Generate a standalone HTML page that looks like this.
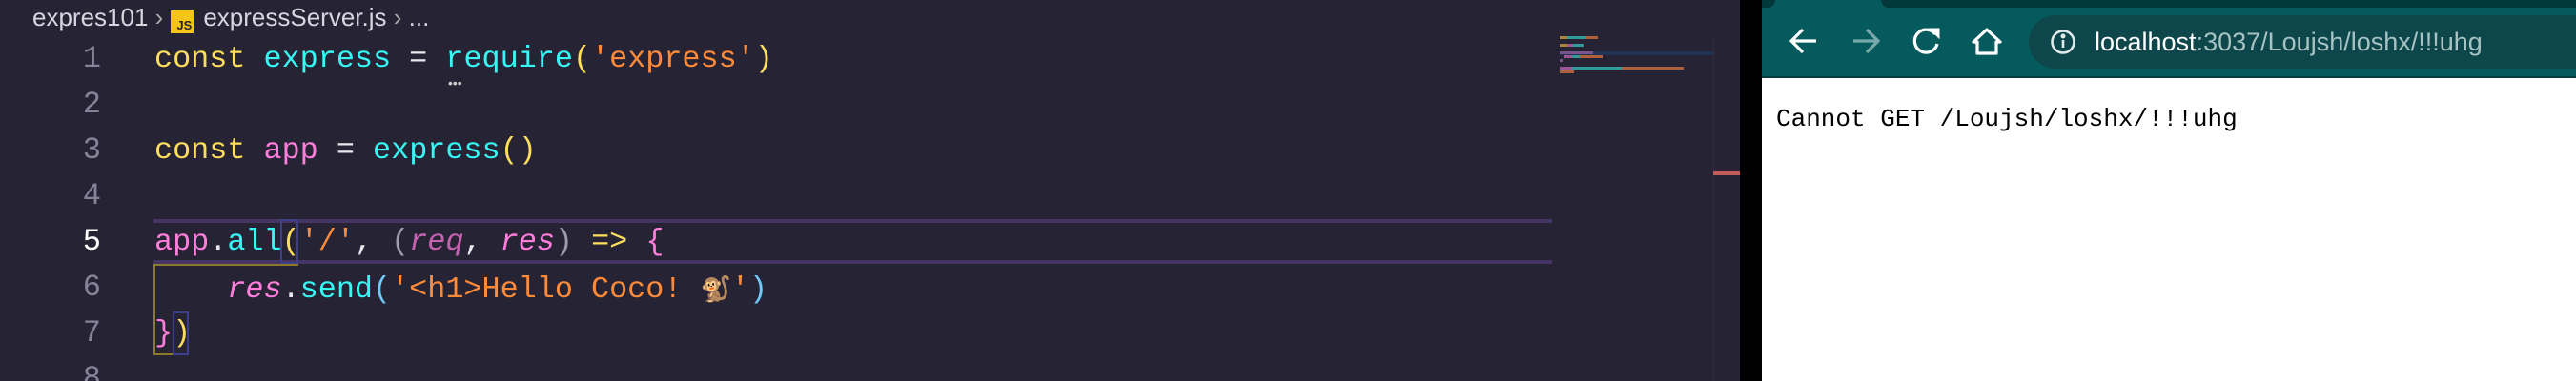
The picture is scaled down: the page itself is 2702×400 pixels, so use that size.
<!DOCTYPE html>
<html style="margin:0;width:2702px;height:400px;overflow:hidden"><head><meta charset="utf-8"><style>
body{margin:0;width:2702px;height:400px;overflow:hidden;background:#262335;position:relative;font-family:"Liberation Sans",sans-serif}
.ed{position:absolute;left:0;top:0;width:1825px;height:400px;background:#262335;overflow:hidden}
.bc{position:absolute;top:3px;left:34px;height:30px;font-size:26px;color:#d8d5e0;line-height:30px;white-space:nowrap}
.js{display:inline-block;width:24px;height:24px;background:#f5c518;color:#262335;font-size:13px;font-weight:bold;text-align:right;line-height:32px;vertical-align:-4px;margin:0 10px 0 8px;box-sizing:border-box;padding-right:2px}
.ln{position:absolute;left:40px;width:66px;text-align:right;font-family:"Liberation Mono",monospace;font-size:32px;color:#858398;line-height:48px;height:48px;overflow:hidden}
.cd{position:absolute;left:162px;font-family:"Liberation Mono",monospace;font-size:31.8px;line-height:48px;white-space:pre;color:#fff}
.y{color:#fede5d}.c{color:#36f9f6}.o{color:#ff8b39}.p{color:#ff7edb}.w{color:#e8e8ee}.i{font-style:italic}.g{color:#a09cb0}.b{color:#72c8f8}
.br{position:absolute;left:1848px;top:0;width:854px;height:400px;background:#fff;overflow:hidden}
.tb{position:absolute;left:0;top:0;width:854px;height:80px;background:#055a5d;overflow:hidden}
.tab{position:absolute;left:125px;top:0;width:729px;height:8px;background:#03383b;border-radius:0 0 0 14px}
.tab2{position:absolute;left:0;top:0;width:14px;height:8px;background:#03383b;border-radius:0 0 10px 0}
.ln2{position:absolute;left:0;top:80px;width:854px;height:2px;background:#033d40}
.pill{position:absolute;left:280px;top:16px;width:574px;height:56px;background:#0d474c;border-radius:28px 0 0 28px}
.url{position:absolute;left:349px;top:26px;font-size:27px;line-height:36px;color:#fff;white-space:nowrap}
.url span{color:#a7c2c3}
.msg{position:absolute;left:15px;top:110px;font-family:"Liberation Mono",monospace;font-size:26px;color:#000;line-height:30px}
</style></head><body>
<div class="ed">
<div class="bc">expres101 <span style="color:#aaa">&#x203A;</span><span class="js">JS</span>expressServer.js <span style="color:#aaa">&#x203A;</span> ...</div>
<div style="position:absolute;left:161px;top:230px;width:1467px;height:47px;border-top:4px solid #453563;border-bottom:4px solid #453563;box-sizing:border-box"></div>
<div style="position:absolute;left:294px;top:230px;width:19px;height:47px;border:2px solid #3d3f8a;box-sizing:border-box"></div>
<div style="position:absolute;left:161px;top:277px;width:2px;height:96px;background:#8a7a2a"></div>
<div style="position:absolute;left:161px;top:277px;width:152px;height:2px;background:#8a7a2a"></div>
<div style="position:absolute;left:161px;top:371px;width:37px;height:2px;background:#8a7a2a"></div>
<div style="position:absolute;left:181px;top:327px;width:17px;height:46px;border:2px solid #3d3f8a;box-sizing:border-box"></div>
<div class="ln" style="top:38px">1</div><div class="ln" style="top:86px">2</div><div class="ln" style="top:134px">3</div><div class="ln" style="top:182px">4</div><div class="ln" style="top:230px;color:#fff">5</div><div class="ln" style="top:278px">6</div><div class="ln" style="top:326px">7</div><div class="ln" style="top:374px;height:26px;line-height:48px">8</div>
<div class="cd" style="top:38px"><span class="y">const</span> <span class="c">express</span> <span class="w">=</span> <span class="c">require</span><span class="y">(</span><span class="o">'express'</span><span class="y">)</span></div>
<div style="position:absolute;left:470px;top:80px;color:#ccc;font-size:14px;line-height:14px">•••</div>
<div class="cd" style="top:134px"><span class="y">const</span> <span class="p">app</span> <span class="w">=</span> <span class="c">express</span><span class="y">()</span></div>
<div class="cd" style="top:230px"><span class="p">app</span><span class="w">.</span><span class="c">all</span><span class="y">(</span><span class="o">'/'</span><span class="w">,</span> <span class="g">(</span><span class="i" style="color:#c462b0">req</span><span class="w">,</span> <span class="p i">res</span><span class="g">)</span> <span class="y">=&gt;</span> <span class="p">{</span></div>
<div class="cd" style="top:278px">    <span class="p i">res</span><span class="w">.</span><span class="c">send</span><span class="b">(</span><span class="o">'&lt;h1&gt;Hello Coco! </span><span style="font-family:'Noto Sans CJK SC',sans-serif;font-size:26px;color:#b07a3a">🐒</span><span class="o">'</span><span class="b">)</span></div>
<div class="cd" style="top:326px"><span class="p">}</span><span class="y">)</span></div>
<div style="position:absolute;left:1636px;top:38px;width:161px;height:45px;opacity:0.8">
<div style="position:absolute;top:0;width:40px;height:3px;background:linear-gradient(90deg,#c9a040 20%,#36b9b6 20% 70%,#d07040 70%)"></div>
<div style="position:absolute;top:8px;width:25px;height:3px;background:linear-gradient(90deg,#c9a040 35%,#c060b0 35% 55%,#36b9b6 55%)"></div>
<div style="position:absolute;top:16px;left:0;width:161px;height:4px;background:#1f3a5f"></div>
<div style="position:absolute;top:16px;width:35px;height:3px;background:#9060a0"></div>
<div style="position:absolute;top:20px;left:5px;width:40px;height:3px;background:linear-gradient(90deg,#c060b0 20%,#36b9b6 20% 40%,#d07040 40%)"></div>
<div style="position:absolute;top:24px;width:3px;height:3px;background:#9060a0"></div>
<div style="position:absolute;top:32px;width:130px;height:3px;background:linear-gradient(90deg,#c060b0 10%,#36b9b6 10% 50%,#d07040 50%)"></div>
<div style="position:absolute;top:36px;width:15px;height:3px;background:#d07040"></div>
</div>
<div style="position:absolute;left:1797px;top:38px;width:1px;height:362px;background:#2f2b42"></div>
<div style="position:absolute;left:1797px;top:180px;width:28px;height:4px;background:#c35b5b"></div>
</div>
<div style="position:absolute;left:1825px;top:0;width:23px;height:400px;background:#000"></div>
<div class="br">
<div class="tb"><div class="tab"></div><div class="tab2"></div>
<svg style="position:absolute;left:0;top:0" width="280" height="80" fill="none" stroke-width="3.2">
<path d="M57 43H32M43 31L31 43L43 55" stroke="#fff"/>
<path d="M96 43H121M110 31L122 43L110 55" stroke="#7aa9aa"/>
<path d="M182 36A12 12 0 1 0 184 46" stroke="#fff"/><path d="M176 30L186 30L186 40Z" fill="#fff" stroke="#fff" stroke-width="1"/>
<path d="M226 56V44H222L236 31L250 44H246V56Z" stroke="#fff" stroke-linejoin="round"/>
</svg>
<div class="pill"></div>
<svg style="position:absolute;left:302px;top:30px" width="28" height="28" fill="none" stroke="#e0eaea" stroke-width="2.6"><circle cx="14" cy="14" r="11.5"/><path d="M14 12V20" /><circle cx="14" cy="8" r="1.2" fill="#e0eaea"/></svg>
<div class="url">localhost<span>:3037/Loujsh/loshx/!!!uhg</span></div>
</div>
<div class="ln2"></div>
<div class="msg">Cannot GET /Loujsh/loshx/!!!uhg</div>
</div>
</body></html>
